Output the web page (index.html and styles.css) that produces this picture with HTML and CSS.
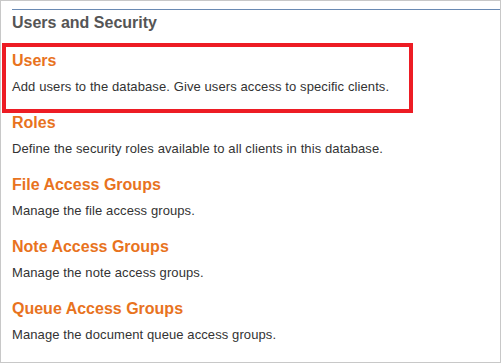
FILE: index.html
```html
<!doctype html>
<html>
<head>
<meta charset="utf-8">
<title>Users and Security</title>
<link rel="stylesheet" href="styles.css">
</head>
<body>
<div class="panel">
  <h2 class="panel-title">Users and Security</h2>
  <div class="item item-marked">
    <a class="item-name" href="#">Users</a>
    <p class="item-desc">Add users to the database. Give users access to specific clients.</p>
  </div>
  <div class="item">
    <a class="item-name" href="#">Roles</a>
    <p class="item-desc">Define the security roles available to all clients in this database.</p>
  </div>
  <div class="item">
    <a class="item-name" href="#">File Access Groups</a>
    <p class="item-desc">Manage the file access groups.</p>
  </div>
  <div class="item">
    <a class="item-name" href="#">Note Access Groups</a>
    <p class="item-desc">Manage the note access groups.</p>
  </div>
  <div class="item">
    <a class="item-name" href="#">Queue Access Groups</a>
    <p class="item-desc">Manage the document queue access groups.</p>
  </div>
</div>
</body>
</html>
```

FILE: styles.css
```css
body { margin: 0; font: 13px/16px "Liberation Sans", Arial, sans-serif; background-color: #fff; color: #333; }
.panel { box-sizing: border-box; height: 363px; border: 1px solid #c8c8c8; padding: 8px 0 0 11px; }
.panel-title { margin: 0; padding-top: 3px; border-top: 1px solid #6a8ab3; font-size: 16px; line-height: 20px; font-weight: bold; color: #555; }
.item { margin-top: 18px; position: relative; }
.item-name { display: block; font-size: 16px; line-height: 20px; font-weight: bold; color: #e8731e; text-decoration: none; }
.item-desc { margin: 8px 0 0; letter-spacing: 0.1px; }
/* highlight frame round the first entry */
.item-marked::before { content: ""; position: absolute; left: -10px; top: -8px; width: 411px; height: 70px; box-sizing: border-box; border: 4px solid #ed1c24; }
```
